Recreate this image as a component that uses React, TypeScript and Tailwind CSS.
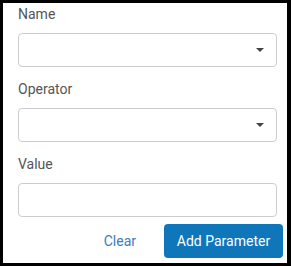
import React from "react";

function Caret() {
  return (
    <svg width="8" height="4" viewBox="0 0 8 4" className="block">
      <path d="M0 0 L8 0 L4 4 Z" fill="#444" />
    </svg>
  );
}

function SelectBox() {
  return (
    <div className="w-[259px] h-[34px] border border-[#cccccc] rounded-[4px] bg-white flex items-center justify-end pr-[12px]">
      <Caret />
    </div>
  );
}

function Label({ children }: { children: React.ReactNode }) {
  return <div className="h-[20px] leading-[20px] text-[14px] text-[#555555] mb-[9px]">{children}</div>;
}

export default function App() {
  return (
    <div className="w-[291px] h-[266px] bg-black pt-[3px] pl-[3px]" style={{ fontFamily: "Roboto, 'Liberation Sans', sans-serif" }}>
      <div className="w-[284px] h-[260px] bg-white pl-[15px] pt-[1px] flex flex-col">
        <Label>Name</Label>
        <SelectBox />
        <div className="h-[12px]" />
        <Label>Operator</Label>
        <SelectBox />
        <div className="h-[12px]" />
        <Label>Value</Label>
        <div className="w-[259px] h-[34px] border border-[#cccccc] rounded-[4px] bg-white" />
        <div className="flex items-center justify-end w-[265px] mt-[7px]">
          <span className="text-[14px] text-[#3a7cc0] mr-[28px]">Clear</span>
          <button className="w-[119px] h-[34px] rounded-[4px] bg-[#1076ba] text-white text-[14px] font-normal">Add Parameter</button>
        </div>
      </div>
    </div>
  );
}
